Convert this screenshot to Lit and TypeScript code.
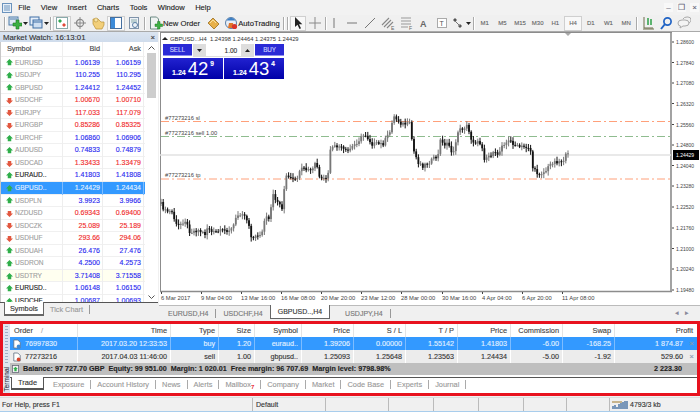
import { LitElement, html, svg, css } from 'lit';

const FONT = css`'Liberation Sans', Arial, sans-serif`;

// ---- toolbar / small icons
const grip = html`<span class="grip"></span>`;
const caret = html`<svg class="caret" width="5" height="3" viewBox="0 0 5 3"><path d="M0 0h5L2.5 3z" fill="#222"/></svg>`;

const icons: Record<string, unknown> = {
  newChart: svg`<rect x="1" y="1" width="9" height="8" fill="#dfe9f5" stroke="#4a7aa8"/><path d="M2 3h7" stroke="#4a7aa8"/><path d="M5 7h3V4h3v3h3v3h-3v3H8v-3H5z" fill="#3cb043" stroke="#1f7a27" stroke-width=".6"/>`,
  profiles: svg`<rect x="1" y="1" width="9" height="8" fill="#e8f0fa" stroke="#3f6fa5"/><rect x="4" y="4" width="9" height="8" fill="#cfdff2" stroke="#3f6fa5"/><path d="M4 6h9" stroke="#3f6fa5"/>`,
  watch: svg`<rect x="1.5" y="1.500" width="11" height="11" fill="#fff" stroke="#8aa"/><path d="M3 5l2-2 2 2-2 2z" fill="#2fa84f"/><path d="M7 9l2 2 2-2-2-2z" fill="#e04a3a"/>`,
  cross: svg`<circle cx="7" cy="7" r="3.600" fill="none" stroke="#8a8a8a" stroke-width="1.200"/><path d="M7 1v12M1 7h12" stroke="#8a8a8a"/>`,
  folder: svg`<path d="M2 3h5l3 3h3v3l-2 4H5L2 8z" fill="#f2cf7a" stroke="#b78f35" stroke-width=".7"/><circle cx="5" cy="4" r="2" fill="#f5e3a8" stroke="#b78f35" stroke-width=".6"/>`,
  nav: svg`<rect x="1.500" y="1.500" width="11" height="11" fill="#fff" stroke="#456f9f"/><rect x="2" y="2" width="4" height="10" fill="#3d8bd8"/>`,
  tester: svg`<rect x="2.500" y="1.500" width="9" height="11" fill="#eef2f8" stroke="#7f93aa"/><path d="M4 4h6M4 6h6" stroke="#8aa"/><circle cx="8" cy="9" r="2.500" fill="none" stroke="#5a7fa5"/>`,
  order: svg`<path d="M1.500 1h6l2 2v10h-8z" fill="#eef3f2" stroke="#6b8a84"/><path d="M6 8h2.500V5.500h2.500V8h2.500v2.500H11V13H8.500v-2.500H6z" fill="#3cb043" stroke="#1f7a27" stroke-width=".5"/>`,
  metaEditor: svg`<path d="M2 7l5-5 6 6-5 5z" fill="#e7b04a" stroke="#9a6d20" stroke-width=".8"/><path d="M4 7l3-3 3 3" fill="none" stroke="#f7e0a0"/>`,
  auto: svg`<circle cx="7" cy="7" r="5.500" fill="#e8eef6" stroke="#5b7fa8"/><path d="M2.500 4.500a5 5 0 0 1 9 0z" fill="#3d7fc4"/><path d="M5 7h4l1 5H4z" fill="#e0762a"/><circle cx="10.500" cy="10.500" r="2.600" fill="#d8342c"/>`,
  arrow: svg`<path d="M4 1v10l2.500-2.200L8.500 13l1.500-.7L8 8.300h3.300z" fill="#222"/>`,
  crosshair: svg`<path d="M7 1v12M1 7h12" stroke="#8a8a8a"/>`,
  vline: svg`<path d="M7 2v10" stroke="#777"/>`,
  hline: svg`<path d="M2 7h10" stroke="#777"/>`,
  trend: svg`<path d="M2 12L12 2" stroke="#777"/>`,
  channel: svg`<path d="M1 9l7-7M3 11l7-7M6 12l6-6" stroke="#888" stroke-width="1.100"/><text x="10" y="14" font-size="5" fill="#666" font-family="Liberation Sans">E</text>`,
  fibo: svg`<path d="M2 2h10M2 5h10M2 8h10M2 11h7" stroke="#999"/><text x="10" y="14" font-size="5" fill="#666" font-family="Liberation Sans">F</text>`,
  textA: svg`<text x="3" y="11" font-size="9" fill="#666" font-weight="700" font-family="Liberation Sans">A</text>`,
  textT: svg`<rect x="2.500" y="2.500" width="9" height="9" fill="#fff" stroke="#aaa"/><text x="4.500" y="10" font-size="7" fill="#555" font-family="Liberation Sans">T</text>`,
  shapes: svg`<path d="M2 4l2-2 2 2-2 2zM7 10l2-2 2 2-2 2z" fill="#555"/><path d="M4 5l5 5" stroke="#777"/>`,
  period: svg`<path d="M3 1v11h9" stroke="#6d6d4a" fill="none"/><path d="M7 2v7M10 3v6" stroke="#1f9a3a" stroke-width="1.400"/><path d="M2 13h11" stroke="#6d6d4a"/>`,
  search: svg`<circle cx="8.500" cy="5.500" r="3.600" fill="none" stroke="#1f62c4" stroke-width="1.700"/><path d="M6 8l-4 5" stroke="#1f62c4" stroke-width="2"/>`,
  chat: svg`<path d="M1 7q0-3 4-3h3q4 0 4 3t-4 3H6l-3 2 .5-2Q1 10 1 7z" fill="#f4f4f4" stroke="#aaa"/><path d="M6 3q1-2 4-2h1q3 0 3 3 0 2-2 3" fill="none" stroke="#aaa"/>`,
};

const ico = (name: string) => html`<svg class="ico" width="14" height="14" viewBox="0 0 14 14">${icons[name]}</svg>`;

// ---- market watch data
type Quote = [string, string, string, boolean, boolean?];
const quotes: Quote[] = [
  ['EURUSD', '1.06139', '1.06159', true],
  ['USDJPY', '110.255', '110.295', true],
  ['GBPUSD', '1.24412', '1.24452', true],
  ['USDCHF', '1.00670', '1.00710', false],
  ['EURJPY', '117.033', '117.079', false],
  ['EURGBP', '0.85286', '0.85325', false],
  ['EURCHF', '1.06860', '1.06906', true],
  ['AUDUSD', '0.74833', '0.74879', true],
  ['USDCAD', '1.33433', '1.33479', false],
  ['EURAUD..', '1.41803', '1.41808', true, true],
  ['GBPUSD..', '1.24429', '1.24434', true],
  ['USDPLN', '3.9923', '3.9966', true],
  ['NZDUSD', '0.69343', '0.69400', false],
  ['USDCZK', '25.089', '25.189', false],
  ['USDHUF', '293.66', '294.06', false],
  ['USDUAH', '26.476', '27.476', true],
  ['USDRON', '4.2500', '4.2573', true],
  ['USDTRY', '3.71408', '3.71558', true],
  ['EURUSD..', '1.06148', '1.06150', true, true],
  ['USDCHF..', '1.00687', '1.00693', true, true],
];

class MarketWatch extends LitElement {
  static styles = css`
    :host { display: flex; flex-direction: column; width: 158px; height: 100%; box-sizing: border-box; padding-bottom: 5px; font: 7px ${FONT}; color: #222; }
    .title { height: 10px; padding: 0 3px; background: linear-gradient(#dbe4f0, #cfdcec); display: flex; align-items: center; justify-content: space-between; font-size: 7.800px; color: #333; flex: none; }
    .body { flex: 1; min-height: 0; display: flex; background: #fff; border-left: 1px solid #c8c8c8; overflow: hidden; }
    .list { width: 144px; flex: none; display: flex; flex-direction: column; overflow: hidden; }
    .row { display: grid; grid-template-columns: 62px 40px 41px; height: 12.55px; line-height: 12.55px; flex: none; border-bottom: 1px solid #f0f0f0; box-sizing: border-box; }
    .head { height: 14.500px; line-height: 14px; color: #444; font-size: 7.300px; border-bottom: 1px solid #eee; }
    .row > div { padding-right: 2px; text-align: right; border-right: 1px solid #eee; }
    .row > .sym { text-align: left; display: flex; align-items: center; gap: 2px; padding-left: 5px; font-size: 6.600px; }
    .head > .sym { padding-left: 6px; color: #444; font-size: 7.300px; }
    .up > div { color: #2828f0; }
    .down > div { color: #f02828; }
    .up > .sym, .down > .sym { color: #a0a0a0; }
    .up > .sym.dark { color: #222; }
    .sel { background: #3399ff; }
    .sel > div, .sel > .sym { color: #e4f2ff; border-right-color: #7dbcff; }
    .try { background: #fffff0; }
    .bar { width: 11px; flex: none; margin-left: 1px; display: flex; flex-direction: column; align-items: center; background: #fff; }
    .bar .thumb { width: 9px; height: 45px; background: #cdcdcd; margin-top: 2px; }
    .bar .sp { flex: 1; }
    .tabs { height: 13px; display: flex; align-items: stretch; background: #f0f0f0; border-top: 1px solid #555; flex: none; font-size: 7.300px; }
    .tab { line-height: 12px; color: #999; }
    .tab.on { background: #fff; color: #333; margin-left: 4px; margin-top: -1px; border: 1px solid #666; border-top: 0; border-bottom-width: 2px; padding: 0 5px; line-height: 13px; }
    .tab.sep { border-right: 1px solid #999; height: 9px; margin: 2px 0 0 6px; line-height: 9px; padding-right: 6px; }
  `;

  render() {
    return html`
      <div class="title"><span>Market Watch: 16:13:01</span><span>×</span></div>
      <div class="body">
        <div class="list">
          <div class="row head"><div class="sym">Symbol</div><div>Bid</div><div>Ask</div></div>
          ${quotes.map(([sym, bid, ask, up, dark]) => html`
            <div class="row ${up ? 'up' : 'down'} ${sym === 'GBPUSD..' ? 'sel' : ''} ${sym === 'USDTRY' ? 'try' : ''}">
              <div class="sym ${dark ? 'dark' : ''}">
                <svg width="7" height="7" viewBox="0 0 8 8">
                  ${up
                    ? svg`<path d="M4 0l4 4H6v3H2V4H0z" fill="#2fae4a"/>`
                    : svg`<path d="M4 8L0 4h2V1h4v3h2z" fill="#e2573f"/>`}
                </svg>${sym}
              </div>
              <div>${bid}</div><div>${ask}</div>
            </div>`)}
        </div>
        <div class="bar">
          <svg width="7" height="6" viewBox="0 0 7 6" style="margin-top:3px"><path d="M.5 4.500L3.500 1.500l3 3" fill="none" stroke="#555"/></svg>
          <div class="thumb"></div><div class="sp"></div>
          <svg width="7" height="6" viewBox="0 0 7 6" style="margin-bottom:2px"><path d="M.5 1.500l3 3 3-3" fill="none" stroke="#555"/></svg>
        </div>
      </div>
      <div class="tabs"><span class="tab on">Symbols</span><span class="tab sep">Tick Chart</span></div>
    `;
  }
}
customElements.define('market-watch', MarketWatch);

// ---- chart: coordinates are screen pixels through the viewBox
const path: Array<[number, number]> = [
  [161, 205], [165, 212], [172, 213], [177, 228], [185, 221], [190, 233], [198, 231], [205, 235], [208, 227],
  [212, 234], [222, 232], [232, 230], [237, 217], [242, 213], [248, 222], [252, 240], [263, 233], [265, 217],
  [270, 223], [272, 195], [283, 210], [285, 177], [295, 182], [302, 170], [312, 172], [316, 162], [320, 182],
  [328, 178], [330, 150], [338, 147], [347, 153], [357, 143], [365, 135], [372, 145], [383, 145], [390, 133],
  [393, 117], [402, 125], [410, 125], [413, 150], [418, 163], [423, 167], [438, 157], [441, 138], [445, 148],
  [448, 142], [453, 157], [458, 132], [467, 127], [472, 142], [482, 145], [483, 160], [492, 155], [499, 155],
  [502, 145], [510, 142], [518, 148], [530, 148], [533, 170], [538, 175], [545, 173], [552, 163], [563, 162],
  [565, 157], [568, 156],
];

function levelAt(x: number) {
  for (let i = 1; i < path.length; i++) {
    if (x <= path[i][0]) {
      const [x0, y0] = path[i - 1];
      const [x1, y1] = path[i];
      return y0 + ((x - x0) / (x1 - x0)) * (y1 - y0);
    }
  }
  return path[path.length - 1][1];
}

const rnd = (i: number) => {
  const v = Math.sin(i * 12.9898) * 43758.5453;
  return v - Math.floor(v);
};

function candles() {
  const out = [];
  let prev = levelAt(161);
  let i = 0;
  for (let x = 161; x <= 568; x += 2.2, i++) {
    const close = levelAt(x) + (rnd(i) - 0.5) * 4;
    const top = Math.min(prev, close);
    const bot = Math.max(prev, close);
    const hi = top - 1 - rnd(i + 500) * 3.5;
    const lo = bot + 1 + rnd(i + 900) * 3.5;
    const down = close > prev;
    const col = down ? '#111' : '#777';
    out.push(svg`<path d="M${x.toFixed(1)} ${hi.toFixed(1)}V${lo.toFixed(1)}" stroke="${col}" stroke-width="1"/>
      <rect x="${(x - 0.9).toFixed(1)}" y="${top.toFixed(1)}" width="1.800" height="${Math.max(bot - top, 1).toFixed(1)}" fill="${col}"/>`);
    prev = close;
  }
  return out;
}

const yLabels: Array<[string, number]> = [
  ['1.28600', 43], ['1.27840', 63.5], ['1.27080', 84], ['1.26320', 104.5], ['1.25560', 125.5], ['1.24800', 146],
  ['1.24040', 166.5], ['1.23280', 187], ['1.22520', 208], ['1.21760', 229], ['1.21000', 249.5], ['1.20240', 270], ['1.19480', 291],
];
const xLabels: Array<[string, number]> = [
  ['6 Mar 2017', 161], ['9 Mar 04:00', 201], ['13 Mar 16:00', 241], ['16 Mar 08:00', 281], ['20 Mar 20:00', 321], ['23 Mar 12:00', 361],
  ['28 Mar 00:00', 401], ['30 Mar 16:00', 442], ['4 Apr 04:00', 482], ['6 Apr 20:00', 522], ['11 Apr 08:00', 562],
];

class ChartView extends LitElement {
  static styles = css`
    :host { display: block; position: relative; height: 273px; background: #fff; overflow: hidden; }
    svg.plot { display: block; font: 5.800px ${FONT}; }
    .panel { position: absolute; left: 4px; top: 12px; width: 121px; height: 35px; font-family: ${FONT}; color: #fff; }
    .top { display: flex; height: 13px; }
    .btn { width: 29px; background: #2a2ad6; color: #cfd4ff; font-size: 6.300px; text-align: center; line-height: 11px; height: 12px; box-shadow: inset 0 -1px 0 #8f8ff0; }
    .stepper { width: 62px; background: #fff; display: flex; align-items: center; color: #333; font-size: 6.500px; margin: 0 1px; box-sizing: border-box; border: 1px solid #ddd; border-top: 0; }
    .step { width: 12px; height: 12px; background: #ddd; display: grid; place-items: center; flex: none; }
    .val { flex: 1; text-align: right; padding-right: 4px; }
    .prices { display: flex; gap: 1px; margin-top: 1px; height: 21px; }
    .price { flex: 1; background: linear-gradient(#2222d0, #0000a8); display: flex; align-items: flex-end; justify-content: center; line-height: 1; padding-bottom: 1px; box-sizing: border-box; }
    .small { font-size: 7px; font-weight: 700; margin-right: 2px; padding-bottom: 2px; }
    .big { font-size: 18.500px; line-height: 19px; -webkit-text-stroke: 0; }
    sup { font-size: 6.500px; align-self: flex-start; margin: 2px 0 0 2px; line-height: 7px; font-weight: 600; }
  `;

  render() {
    return html`
      <svg class="plot" width="541" height="273" viewBox="159 33 541 273">
        <rect x="159" y="33" width="541" height="273" fill="#fff"/>
        <path d="M160.500 33v260M160 33.500h512" stroke="#8c8c8c" fill="none"/>
        <path d="M160 292.500h512M671 33v260" stroke="#8c8c8c" fill="none" stroke-width="1.600"/>
        <path d="M160 156h511" stroke="#e2e2e2" stroke-width="1.500"/>
        <path d="M161 122.500h510M161 180h510" stroke="#ffa07a" stroke-dasharray="8 3 2 3"/>
        <path d="M161 137.500h510" stroke="#8fbc8f" stroke-dasharray="8 3 2 3"/>
        ${candles()}
        <path d="M162 41l3-3 3 3z" fill="#222"/>
        <text x="170" y="41.500" fill="#333" xml:space="preserve">GBPUSD...H4  1.24398 1.24464 1.24375 1.24429</text>
        <text x="165" y="121" fill="#444">#77273216 sl</text>
        <text x="165" y="136" fill="#444">#77273216 sell 1.00</text>
        <text x="165" y="178" fill="#444">#77273216 tp</text>
        ${yLabels.map(([t, y]) => svg`<path d="M672 ${y}h2" stroke="#444"/><text x="676" y="${y + 2}" fill="#444" font-size="5">${t}</text>`)}
        ${xLabels.map(([t, x]) => svg`<path d="M${x + 0.5} 293v2" stroke="#444"/><text x="${x}" y="300.500" fill="#444">${t}</text>`)}
        <path d="M565 34l3 3 3-3z" fill="#aaa"/>
        <rect x="673" y="151" width="26" height="10" fill="#000"/>
        <text x="676" y="158" fill="#fff" font-size="5">1.24429</text>
      </svg>
      <div class="panel">
        <div class="top">
          <div class="btn">SELL</div>
          <div class="stepper">
            <span class="step"><svg width="5" height="3" viewBox="0 0 5 3"><path d="M0 0h5L2.500 3z" fill="#222"/></svg></span>
            <span class="val">1.00</span>
            <span class="step"><svg width="5" height="3" viewBox="0 0 5 3"><path d="M0 3h5L2.500 0z" fill="#222"/></svg></span>
          </div>
          <div class="btn">BUY</div>
        </div>
        <div class="prices">
          <div class="price"><span class="small">1.24</span><span class="big">42</span><sup>9</sup></div>
          <div class="price"><span class="small">1.24</span><span class="big">43</span><sup>4</sup></div>
        </div>
      </div>
    `;
  }
}
customElements.define('chart-view', ChartView);

// ---- terminal
const cols = ['Order', 'Time', 'Type', 'Size', 'Symbol', 'Price', 'S / L', 'T / P', 'Price', 'Commission', 'Swap', 'Profit'];
const orders = [
  { cls: 'sel', cells: ['76997830', '2017.03.20 12:33:53', 'buy', '1.20', 'euraud..', '1.39206', '0.00000', '1.55142', '1.41803', '-6.00', '-168.25', '1 874.87'] },
  { cls: 'alt', cells: ['77273216', '2017.04.03 11:46:00', 'sell', '1.00', 'gbpusd..', '1.25093', '1.25648', '1.23563', '1.24434', '-5.00', '-1.92', '529.60'] },
];
const termTabs = ['Trade', 'Exposure', 'Account History', 'News', 'Alerts', 'Mailbox', 'Company', 'Market', 'Code Base', 'Experts', 'Journal'];

class TerminalPanel extends LitElement {
  static styles = css`
    :host { display: flex; height: 75px; box-sizing: border-box; border: 3px solid #e8121e; background: #fff; font: 7.200px ${FONT}; color: #333; }
    .side { width: 7px; flex: none; background: #dfe6f0; position: relative; overflow: hidden; }
    .side::before { content: ''; position: absolute; left: 2px; top: 2px; width: 3px; height: 38px; background: repeating-linear-gradient(#9fb0c5 0 1px, transparent 1px 3px); }
    .side span { position: absolute; left: 0; bottom: 1px; writing-mode: vertical-rl; transform: rotate(180deg); font-size: 6.500px; line-height: 7px; color: #334; }
    .main { flex: 1; min-width: 0; display: flex; flex-direction: column; }
    .grid { display: grid; grid-template-columns: 68px 93px 48px 36px 47px 52px 52px 52px 53px 52px 52px 1fr; height: 13px; line-height: 13px; flex: none; }
    .grid > div { text-align: right; padding-right: 3px; border-right: 1px solid #e4e4e4; white-space: nowrap; }
    .grid > div:first-child { text-align: left; padding-left: 3px; display: flex; align-items: center; gap: 4px; }
    .grid > div:last-child { border-right: 0; position: relative; padding-right: 14px; }
    .hd > div:first-child { padding-left: 4px; gap: 8px; }
    .hd > div:last-child { padding-right: 4px; }
    .hd { color: #444; font-size: 7.400px; }
    .slash { color: #aaa; }
    .sel { background: #3399ff; color: #e4f2ff; }
    .sel > div { border-right-color: #7dbcff; }
    .alt { background: #ececec; }
    .alt > div { border-right-color: #fff; }
    .x { position: absolute; right: 3px; top: 0; color: #8a9ab0; font-size: 8px; }
    .sum { height: 12px; line-height: 12px; background: #bfbfbf; display: flex; align-items: center; font-weight: 700; color: #222; white-space: nowrap; gap: 4px; padding-left: 2px; position: relative; flex: none; }
    .sum b { position: absolute; right: 15px; }
    .tabs { margin-top: 2px; height: 14px; border-top: 1px solid #555; display: flex; align-items: flex-start; flex: none; color: #999; font-size: 7.400px; }
    .t { padding: 0 6px; margin-top: 2px; line-height: 9px; height: 9px; border-right: 1px solid #aaa; white-space: nowrap; }
    .t.on { margin: -1px 3px 0 1px; height: 13px; line-height: 12px; padding: 0 6px; color: #333; background: #fff; border: 1px solid #555; border-top: 0; border-bottom-width: 2px; box-sizing: border-box; }
    sub { color: #e8121e; font-size: 6px; line-height: 0; }
  `;

  render() {
    return html`
      <div class="side"><span>Terminal</span></div>
      <div class="main">
        <div class="grid hd">${cols.map((c, i) => html`<div>${c}${i === 0 ? html`<span class="slash">/</span>` : ''}</div>`)}</div>
        ${orders.map((o) => html`
          <div class="grid ${o.cls}">
            ${o.cells.map((c, i) => html`<div>
              ${i === 0 ? html`<svg width="8" height="10" viewBox="0 0 10 11"><path d="M1 .500h5l3 3v7H1z" fill="#fff" stroke="#5d6f82"/>${o.cls === 'alt' ? svg`<circle cx="7" cy="8.500" r="2.300" fill="#d8442c"/>` : svg`<circle cx="7" cy="8.500" r="2.300" fill="#3d8bd8"/>`}</svg>` : ''}${c}${i === 11 ? html`<span class="x">×</span>` : ''}
            </div>`)}
          </div>`)}
        <div class="sum">
          <svg width="7" height="8" viewBox="0 0 9 10"><rect x=".5" y=".5" width="8" height="9" fill="#f4f4f4" stroke="#667"/><path d="M4.500 2l3 3H6v3H3V5H1.500z" fill="#2fae4a"/></svg>
          <span>Balance: 97 727.70 GBP&nbsp; Equity: 99 951.00&nbsp; Margin: 1 020.01&nbsp; Free margin: 96 707.69&nbsp; Margin level: 9798.98%</span>
          <b>2 223.30</b>
        </div>
        <div class="tabs">
          ${termTabs.map((t, i) => html`<span class="t ${i === 0 ? 'on' : ''}">${t}${t === 'Mailbox' ? html`<sub>7</sub>` : ''}</span>`)}
        </div>
      </div>
    `;
  }
}
customElements.define('terminal-panel', TerminalPanel);

// ---- shell
class AppRoot extends LitElement {
  static styles = css`
    :host { display: flex; flex-direction: column; width: 700px; height: 412px; overflow: hidden; background: #f0f0f0; font: 7.500px ${FONT}; color: #222; -webkit-text-stroke: 0.12px; }
    .menu { height: 15px; display: flex; align-items: center; background: #f2f2f2; flex: none; padding-left: 1px; box-sizing: border-box; font-size: 7.600px; }
    .menu .m { padding: 0 5.200px; }
    .app { flex: none; }
    .win { margin-left: auto; display: flex; gap: 4px; color: #667; font-size: 8px; padding-right: 1px; }
    .win span { width: 9px; text-align: center; background: #f8f8f8; }
    .tools { height: 17px; display: flex; align-items: center; flex: none; border-bottom: 1px solid #aaa; box-sizing: border-box; padding-left: 3px; font-size: 7.700px; }
    .grip { width: 1px; height: 13px; background: #aaa; border-right: 1px solid #fff; margin: 0 1px; flex: none; }
    .ico { flex: none; display: block; }
    .on { box-shadow: inset 0 0 0 1px #cfcfcf; background: #f8f8f8; }
    .tb { display: flex; align-items: center; justify-content: center; height: 15px; width: 18px; flex: none; }
    .tb.drop { width: 21px; }
    .tb.text { width: auto; gap: 0; white-space: nowrap; padding: 0 2px; }
    .tb.auto { margin-left: 2px; padding-left: 0; }
    .tb.meta { margin-left: 2px; }
    .tb.arrow { width: 16px; }
    .pull { margin-right: -2px; }
    .caret { margin-left: 1px; }
    .per { width: 17.700px; text-align: center; color: #666; font-size: 6px; line-height: 15px; flex: none; }
    .work { height: 289px; display: flex; flex: none; overflow: hidden; }
    .right { flex: 1; min-width: 0; margin-left: 1px; display: flex; flex-direction: column; }
    .ctabs { height: 16px; display: flex; border-top: 1px solid #bbb; color: #777; align-items: flex-start; position: relative; box-sizing: border-box; font-size: 7px; }
    .ct { padding: 0 7px; height: 9px; line-height: 9px; margin-top: 3px; border-right: 1px solid #999; white-space: nowrap; }
    .ct.first { padding-left: 9px; }
    .ct.cur { background: #fff; color: #333; height: 14px; line-height: 13px; margin-top: -1px; border: 1px solid #666; border-top: 0; padding: 0 7px; box-sizing: border-box; margin-right: 8px; }
    .ct.prev { border-right: 0; }
    .ctabs .nav { position: absolute; right: 5px; top: 3px; color: #889; font-size: 7px; letter-spacing: 6px; }
    .status { margin-top: 1px; height: 13px; display: flex; line-height: 13px; color: #333; border-top: 1px solid #ddd; border-bottom: 1px solid #a9cdec; flex: none; font-size: 7px; }
    .s { border-right: 1px solid #bbb; padding-left: 2px; box-sizing: border-box; height: 13px; flex: none; white-space: nowrap; }
    .s1 { width: 253px; } .s2 { width: 73px; padding-left: 3px; } .s3 { width: 63px; } .s4 { width: 45px; } .s5 { width: 43px; }
    .kb { display: flex; align-items: center; gap: 2px; padding-left: 2px; }
  `;

  tb(name: string, on = false, drop = false) {
    return html`<span class="tb ${on ? 'on' : ''} ${drop ? 'drop' : ''}">${ico(name)}${drop ? caret : ''}</span>`;
  }

  render() {
    return html`
      <div class="menu">
        <svg class="app" width="12" height="12" viewBox="0 0 12 12"><rect x="1.500" y="1.500" width="9" height="9" fill="#e8f0f8" stroke="#6b93bd"/><path d="M3 4h6M3 6h6M3 8h6" stroke="#6b93bd"/></svg>
        ${['File', 'View', 'Insert', 'Charts', 'Tools', 'Window', 'Help'].map((m) => html`<span class="m">${m}</span>`)}
        <div class="win"><span>–</span><span>❐</span><span>×</span></div>
      </div>
      <div class="tools">
        ${grip}
        ${this.tb('newChart', false, true)}${this.tb('profiles', false, true)}
        ${grip}
        ${this.tb('watch', true)}${this.tb('cross')}${this.tb('folder')}${this.tb('nav', true)}${this.tb('tester')}
        ${grip}
        <span class="tb text">${ico('order')}New Order</span>
        <span class="tb meta">${ico('metaEditor')}</span>
        <span class="tb text auto">${ico('auto')}AutoTrading</span>
        ${grip}${grip}
        <span class="tb arrow on">${ico('arrow')}</span>${this.tb('crosshair')}
        <span class="grip pull"></span>
        ${this.tb('vline')}${this.tb('hline')}${this.tb('trend')}${this.tb('channel')}${this.tb('fibo')}${this.tb('textA')}${this.tb('textT')}${this.tb('shapes', false, true)}
        ${grip}
        ${['M1', 'M5', 'M15', 'M30', 'H1', 'H4', 'D1', 'W1', 'MN'].map((p) => html`<span class="per ${p === 'H4' ? 'on' : ''}">${p}</span>`)}
        ${grip}
        ${this.tb('period')}${this.tb('search')}${this.tb('chat')}
      </div>
      <div class="work">
        <market-watch></market-watch>
        <div class="right">
          <chart-view></chart-view>
          <div class="ctabs">
            <span class="ct first">EURUSD,H4</span>
            <span class="ct prev">USDCHF,H4</span>
            <span class="ct cur">GBPUSD..,H4</span>
            <span class="ct">USDJPY,H4</span>
            <span class="nav">◂▸</span>
          </div>
        </div>
      </div>
      <terminal-panel></terminal-panel>
      <div class="status">
        <span class="s s1">For Help, press F1</span>
        <span class="s s2">Default</span>
        <span class="s s3"></span>
        <span class="s s4"></span>
        <span class="s s4"></span>
        <span class="s s4"></span>
        <span class="s s5"></span>
        <span class="s s5"></span>
        <span class="kb">
          <svg width="16" height="9" viewBox="0 0 16 9"><path d="M1 9V6M3 9V5M5 9V7M7 9V4M9 9V3M11 9V2M13 9V1M15 9V1" stroke="#2a5c94" stroke-width="1.200"/><path d="M0 2h10" stroke="#a07a2a"/></svg>
          4793/3 kb
        </span>
      </div>
    `;
  }
}
customElements.define('app-root', AppRoot);
